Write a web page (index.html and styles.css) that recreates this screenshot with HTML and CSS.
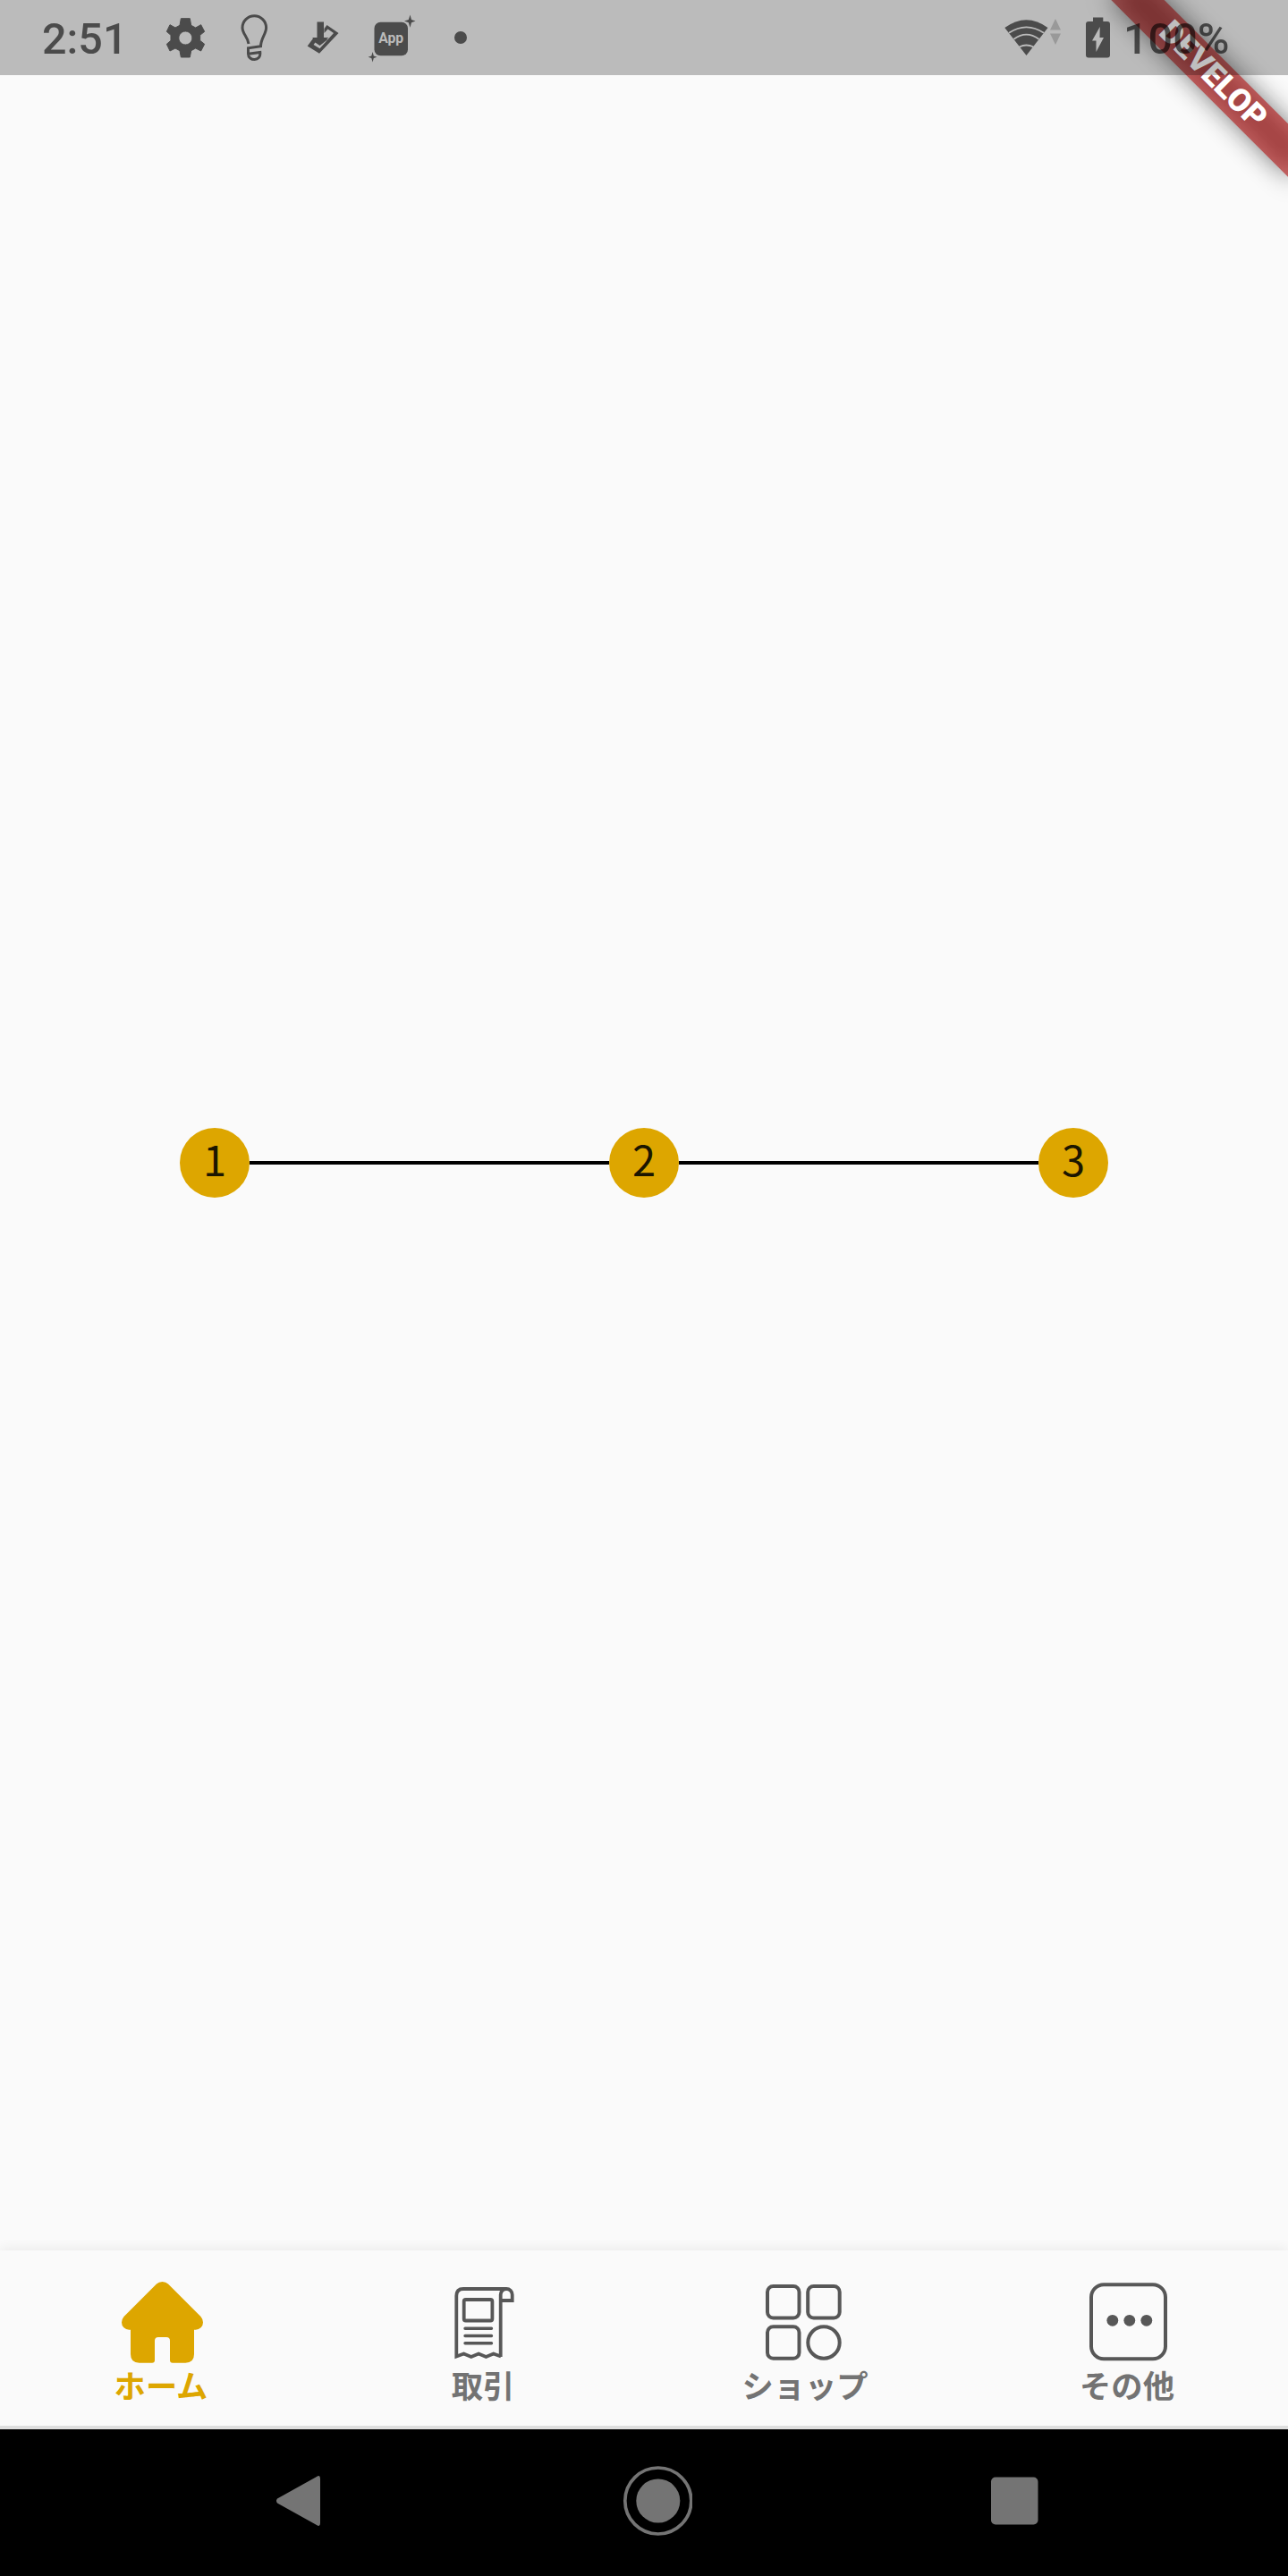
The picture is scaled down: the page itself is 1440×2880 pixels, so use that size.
FILE: index.html
```html
<!DOCTYPE html>
<html lang="ja">
<head>
<meta charset="utf-8">
<title>ホーム</title>
<link rel="stylesheet" href="styles.css">
</head>
<body>
<div class="screen">
  <div class="banner" aria-hidden="true">
    <div class="banner-shadow"></div>
    <div class="banner-band">DEVELOP</div>
  </div>

  <header class="status">
    <span class="clock">2:51</span>
    <svg class="notices" width="360" height="84" viewBox="170 0 360 84">
      <path fill-rule="evenodd" stroke="#4b4b4b" stroke-width="3" stroke-linejoin="round" transform="scale(.33333)" d="M607 62H637L641 85 656 93 674 83 686 106 671 118V136L686 148 674 171 656 162 641 170 637 192H607L603 170 588 162 570 171 559 148 573 136V118L559 106 570 83 588 93 603 85zM622 105a22.500 22.500 0 1 0 .1 0z"/>
      <g fill="none" stroke="#4b4b4b" stroke-width="3">
        <path d="M278 49C277 41 271 38 271 31a13.300 13.300 0 0 1 26.600 0C297.600 38 291.500 43 291.500 51.800L277.500 53.800V60"/>
        <path d="M277.500 60.300L290.800 58.500C292 69.500 277.500 68.500 277.500 60.300z"/>
      </g>
      <path d="M354.500 24.500h7.500V42h5.500l-9.500 7.500-9-7.500h5.500z"/>
      <path fill-rule="evenodd" d="M350 43l-6.300 8.500L357 59.800 378.500 37 365.500 28l-3 4v5l4-4.500 6.500 4.600L357.500 54.200 350.500 50l2-2.500 5 3.500 9-7z"/>
      <rect x="418.500" y="24.700" width="37.500" height="37.500" rx="7"/>
      <path d="M458.500 16.500l1.500 5.500 4.500 1.500-4.500 1.700-1.500 5.500-1.700-5.500-4.800-1.700 4.800-1.500zM416.600 58l1.200 4.500 3.700 1.200-3.700 1.200-1.200 4.600-1.300-4.600-3.700-1.200 3.700-1.200z"/>
      <text class="app-text" x="437.200" y="48" text-anchor="middle" textLength="28" lengthAdjust="spacingAndGlyphs">App</text>
      <circle cx="515" cy="42" r="7"/>
    </svg>
    <svg class="signals" width="140" height="84" viewBox="1118 0 140 84">
      <path d="M1123.300 31Q1147.500 13.500 1171.500 31L1147.500 62z"/>
      <g fill="none" stroke="#bbb" stroke-width="1.800">
        <path d="M1128 36.800q19.500-13 39 0M1133.500 43.700q14-10 28 0M1139.500 52.500q8-4 16 0"/>
      </g>
      <path class="faint" d="M1174 33.500l6-12.500 6 12.500zM1174 37.500h12l-6 12.500z"/>
      <path fill-rule="evenodd" d="M1222 19.500h11.300v4.500h4.700a3 3 0 0 1 3 3v34.500a3 3 0 0 1-3 3h-21a3 3 0 0 1-3-3V27a3 3 0 0 1 3-3h5zM1229.700 30l-8.700 15.500h4.500V58l8.500-16h-4.500z"/>
    </svg>
    <span class="battery">100%</span>
  </header>

  <main class="content">
    <ol class="steps">
      <li class="step"><span class="dot">1</span></li>
      <li class="step"><span class="dot">2</span></li>
      <li class="step"><span class="dot">3</span></li>
    </ol>
  </main>

  <nav class="tabs">
    <a class="tab active">
      <svg width="98" height="98" viewBox="131 2548 98 98">
        <path d="M181.500 2551q4 0 6.500 2.500l36.500 36.500q2.500 3 2.500 6.500a8.300 8.300 0 0 1-8.300 8.300h-1.700V2632q0 9.700-9.700 9.700H193q-3 0-3-3V2617q0-4-4-4h-9q-4 0-4 4v21.700q0 3-3 3h-14.300q-9.700 0-9.700-9.700v-27.200h-1.700a8.300 8.300 0 0 1-8.300-8.300q0-3.500 2.500-6.500l36.500-36.500q2.500-2.500 6.500-2.500z"/>
      </svg>
      <span>ホーム</span>
    </a>
    <a class="tab">
      <svg width="98" height="98" viewBox="491 2548 98 98">
        <g class="line" stroke-width="3.800">
          <path d="M559.700 2635V2565.500a6.500 6.500 0 0 1 13 0v6.500h-13M566 2559h-48q-7.700 0-7.700 7.700V2634.500l8.200-3 8.300 3.500 8.300-3.500 8.300 3.500 8.300-3.500 8.300 3"/>
          <rect x="518.700" y="2571" width="31.700" height="23.500" rx="2"/>
          <path stroke-linecap="round" stroke-width="3.400" d="M520 2603.300h29.500M520 2611.500h29.500M520 2619.800h29.500"/>
        </g>
      </svg>
      <span>取引</span>
    </a>
    <a class="tab">
      <svg width="98" height="98" viewBox="851 2548 98 98">
        <g class="line" stroke-width="4">
          <rect x="858" y="2556" width="35.500" height="35.500" rx="6.500"/>
          <rect x="903.200" y="2556" width="35.500" height="35.500" rx="6.500"/>
          <rect x="858" y="2601.200" width="35.500" height="35.500" rx="6.500"/>
          <circle cx="921" cy="2619" r="17.700"/>
        </g>
      </svg>
      <span>ショップ</span>
    </a>
    <a class="tab">
      <svg width="98" height="98" viewBox="1211 2548 98 98">
        <rect class="line" stroke-width="4" x="1220" y="2554.300" width="83" height="83" rx="14"/>
        <circle cx="1243.800" cy="2594.300" r="6.400"/><circle cx="1262.800" cy="2594.300" r="6.400"/><circle cx="1281.800" cy="2594.300" r="6.400"/>
      </svg>
      <span>その他</span>
    </a>
  </nav>

  <footer class="system-nav">
    <svg width="80" height="80" viewBox="294 2756 80 80"><path d="M310 2793.500l44-24.500q4-2.500 4 2v50q0 4.500-4 2l-44-24.500q-2-2.500 0-5z"/></svg>
    <svg width="80" height="80" viewBox="694 2756 80 80"><circle cx="735.800" cy="2796" r="37" fill="none" stroke="#747474" stroke-width="3.700"/><circle cx="735.800" cy="2796" r="24.500"/></svg>
    <svg width="80" height="80" viewBox="1094 2756 80 80"><rect x="1108" y="2769.500" width="52.500" height="53" rx="5"/></svg>
  </footer>
</div>
</body>
</html>
```

FILE: styles.css
```css
* { box-sizing: border-box; }

body {
  margin: 0;
  background: #fafafa;
}

.screen {
  position: relative;
  display: flex;
  flex-direction: column;
  width: 1440px;
  height: 2880px;
  overflow: hidden;
  background: #fafafa;
}

/* Diagonal ribbon over the top right corner, beneath the status bar scrim */
.banner {
  position: absolute;
  top: 63px;
  right: -56px;
  width: 280px;
  height: 42px;
  transform: rotate(45deg);
}

.banner-shadow,
.banner-band {
  position: absolute;
  inset: 0;
}

.banner-shadow {
  background: rgba(0, 0, 0, 0.5);
  filter: blur(14px);
}

.banner-band {
  background: rgba(183, 28, 28, 0.627);
  color: #fff;
  font: 900 35.7px/40px Roboto, sans-serif;
  text-align: center;
}

.status {
  position: relative;
  display: flex;
  align-items: center;
  height: 84px;
  padding-left: 47px;
  background: rgba(0, 0, 0, 0.25);
  color: rgba(0, 0, 0, 0.6);
  font: 500 48.5px/84px Roboto, sans-serif;
}

.status svg {
  flex: none;
  fill: #4b4b4b;
}

.clock {
  width: 123px;
  padding-top: 4px;
}

.signals {
  margin-left: auto;
  margin-right: -2px;
}

.battery {
  width: 184px;
  padding-top: 4px;
}

.status .faint {
  fill: #999;
}

.status .app-text {
  fill: #bbb;
  font: 700 16px Roboto, sans-serif;
}

.content {
  display: flex;
  flex: 1;
  align-items: center;
}

.steps {
  display: grid;
  grid-template-columns: repeat(3, 480px);
  width: 100%;
  margin: 0;
  padding: 0;
  list-style: none;
}

.step {
  display: flex;
  align-items: center;
  justify-content: center;
}

.step::before,
.step::after {
  content: "";
  flex: 1;
  height: 4px;
  background: #000;
}

.step:first-child::before,
.step:last-child::after {
  background: none;
}

.dot {
  width: 78px;
  height: 78px;
  border-radius: 50%;
  background: #dda600;
  color: #1b1600;
  font: 400 47px/67px "Noto Sans CJK JP", sans-serif;
  text-align: center;
}

.tabs {
  display: grid;
  grid-template-columns: repeat(4, 1fr);
  height: 200px;
  border-bottom: 4px solid #dedede;
  background: #fafafa;
  box-shadow: 0 0 14px rgba(0, 0, 0, 0.09);
}

.tab {
  display: flex;
  flex-direction: column;
  align-items: center;
  padding-top: 32px;
  color: #737373;
  fill: #575757;
  font: 700 35.3px/40px "Noto Sans CJK JP", sans-serif;
}

.tab.active {
  color: #dda600;
  fill: #dda600;
}

.line {
  fill: none;
  stroke: #575757;
}

.system-nav {
  display: grid;
  grid-template-columns: repeat(3, 400px);
  place-items: center;
  height: 164px;
  padding-left: 134px;
  padding-bottom: 4px;
  background: #000;
  fill: #747474;
}
```
